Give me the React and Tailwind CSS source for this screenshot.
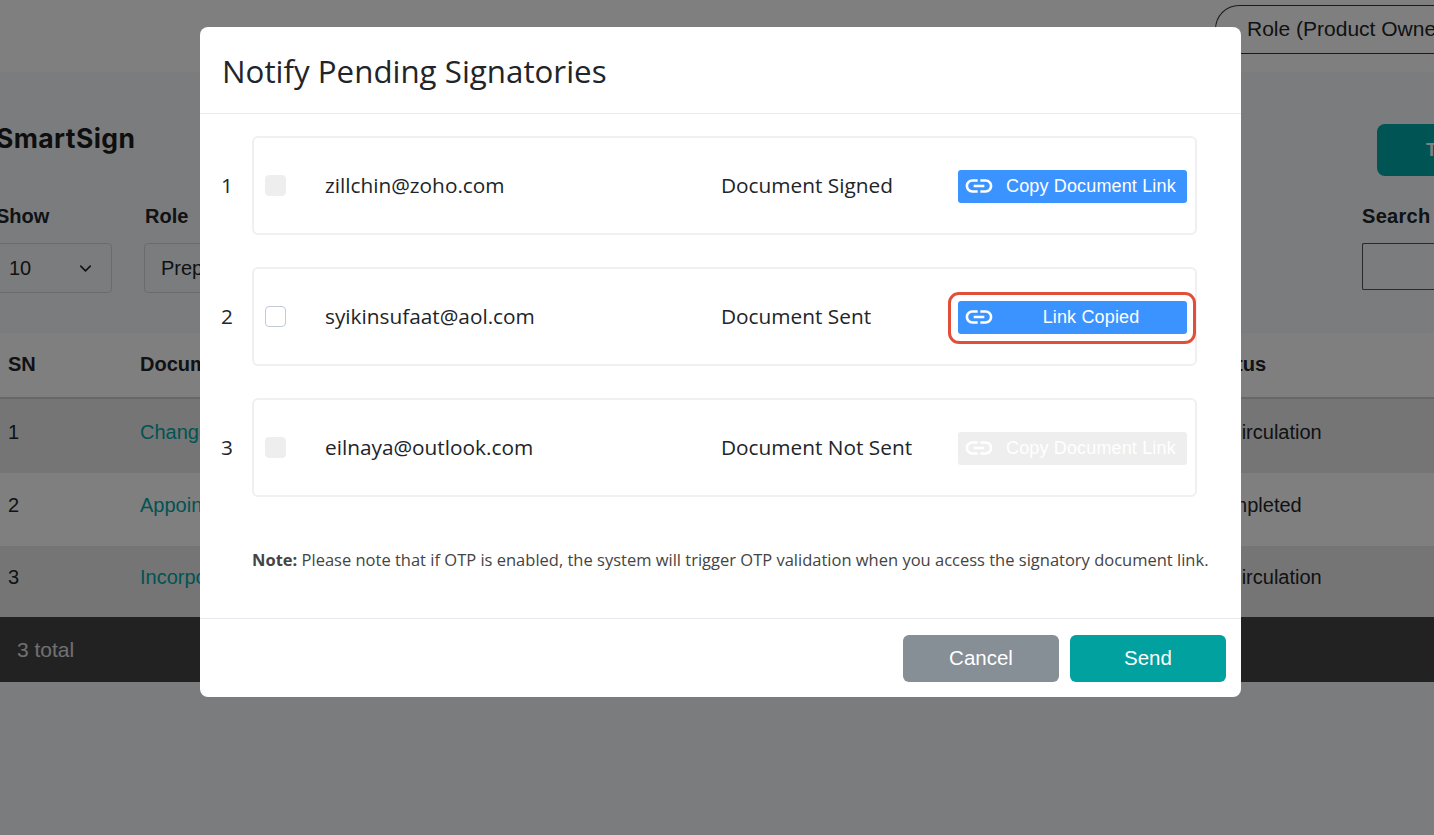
import React from 'react';
import { MdLink } from 'react-icons/md';
import { ChevronDown } from 'lucide-react';

const signatories = [
  { id: 1, email: 'zillchin@zoho.com', status: 'Document Signed', state: 'active', disabled: true },
  { id: 2, email: 'syikinsufaat@aol.com', status: 'Document Sent', state: 'copied', disabled: false },
  { id: 3, email: 'eilnaya@outlook.com', status: 'Document Not Sent', state: 'off', disabled: true },
];

const docs = [
  { sn: 1, name: 'Change Request Form', status: 'In Circulation', row: 'bg-[#ebebeb] h-[74px]' },
  { sn: 2, name: 'Appointment Letter', status: 'Completed', row: 'bg-[#fefefe] h-[73px]' },
  { sn: 3, name: 'Incorporation Papers', status: 'In Circulation', row: 'bg-[#ebebeb] h-[71px]' },
];

function Background() {
  return (
    <div className="w-full h-full flex flex-col bg-[#f6f8fc] text-[#212529] font-['Liberation_Sans',Arial,sans-serif]">
      <div className="h-[72px] bg-white flex justify-end items-start shrink-0 pt-[5px]">
        <div className="w-[219px] h-[49px] border-l border-t border-b border-[#333] rounded-tl-[24px] rounded-bl-[24px] pl-[31px] pb-[2px] flex items-center text-[21px] whitespace-nowrap overflow-hidden">
          Role (Product Owner)
        </div>
      </div>
      <div className="flex justify-between items-start h-[52px] mt-[52px] shrink-0">
        <div className="-ml-[4px] font-['Inter',sans-serif] font-bold text-[26.5px] tracking-[0.4px] leading-[28px] text-[#1c1c1c]">SmartSign</div>
        <div className="w-[57px] h-[52px] bg-[#00a8a6] rounded-l-[8px] pl-[49px] flex items-center text-white font-bold text-[18px] overflow-hidden">T</div>
      </div>
      <div className="flex mt-[27px] h-[81px] shrink-0 -ml-[4px] text-[20px]">
        <div className="w-[148px]">
          <div className="font-bold h-[26px] leading-[26px]">Show</div>
          <div className="w-[116px] h-[50px] mt-[14px] border border-[#d5d7db] rounded-[4px] flex items-center justify-between pl-[12px] pr-[16px]">
            10 <ChevronDown size={19} strokeWidth={2} />
          </div>
        </div>
        <div>
          <div className="font-bold h-[26px] leading-[26px] ml-[1px]">Role</div>
          <div className="w-[300px] h-[50px] mt-[14px] border border-[#d5d7db] rounded-[4px] flex items-center pl-[16px]">Preparer</div>
        </div>
        <div className="ml-auto w-[72px]">
          <div className="font-bold h-[26px] leading-[26px] tracking-[0.3px]">Search</div>
          <div className="h-[47px] mt-[14px] border-l border-t border-b border-[#555] rounded-l-[2px]"></div>
        </div>
      </div>
      <div className="mt-[49px] shrink-0 text-[20px]">
        <div className="grid grid-cols-[132px_1065px_1fr] items-center px-[8px] pb-[3px] h-[66px] bg-white border-b-2 border-[#d0d0d0] font-bold">
          <div>SN</div>
          <div>Document Name</div>
          <div>Status</div>
        </div>
        {docs.map((d) => (
          <div key={d.sn} className={`grid grid-cols-[132px_1065px_1fr] items-center px-[8px] pb-[9px] ${d.row}`}>
            <div>{d.sn}</div>
            <div className="text-[#00a8a6]">{d.name}</div>
            <div>{d.status}</div>
          </div>
        ))}
        <div className="h-[65px] bg-[#444] text-[#e0e0e0] flex items-center px-[17px] text-[21px]">3 total</div>
      </div>
    </div>
  );
}

function LinkButton({ state }) {
  const cls = state === 'off' ? 'bg-[#eeeeee]' : 'bg-[#3b93ff]';
  return (
    <button className={`relative w-[229px] h-[33px] mt-[2px] rounded-[3px] flex items-center text-white text-[18px] tracking-[0.15px] font-['Liberation_Sans',Arial,sans-serif] ${cls}`}>
      <MdLink size={32} className="absolute left-[5px] top-[0px]" />
      {state === 'copied'
        ? <span className="w-full pl-[37px] text-center">Link Copied</span>
        : <span className="pl-[48px] whitespace-nowrap">Copy Document Link</span>}
      {state === 'copied' && (
        <span className="absolute -left-[10px] -right-[9px] -top-[9px] -bottom-[10px] border-[3px] border-[#e14f3b] rounded-[11px]"></span>
      )}
    </button>
  );
}

export default function App() {
  return (
    <div className="relative w-screen h-screen overflow-hidden">
      <Background />
      <div className="fixed inset-0 bg-black/50">
        <div className="ml-[200px] mt-[27px] w-[1041px] h-[670px] bg-white rounded-[8px] flex flex-col text-[#212529] font-['Open_Sans',sans-serif]">
          <div className="h-[87px] shrink-0 border-b border-[#e9ecef] pl-[22px] pt-[2px] flex items-center text-[31.3px]">
            Notify Pending Signatories
          </div>
          <div className="flex-1 pt-[22px] pl-[21px] pr-[44px]">
            <div className="flex flex-col gap-[32px]">
              {signatories.map((s) => (
                <div key={s.id} className="flex items-center text-[20.8px]">
                  <div className="w-[31px]">{s.id}</div>
                  <div className="flex-1 h-[99px] border-2 border-[#f0f0f0] rounded-[6px] flex items-center pl-[11px]">
                    <input
                      type="checkbox"
                      disabled={s.disabled}
                      className={`appearance-none w-[21px] h-[21px] rounded-[4px] mr-[39px] border ${s.disabled ? 'bg-[#eeeeee] border-[#eeeeee]' : 'bg-white border-[#c3cad8]'}`}
                    />
                    <div className="w-[396px]">{s.email}</div>
                    <div className="w-[237px]">{s.status}</div>
                    <LinkButton state={s.state} />
                  </div>
                </div>
              ))}
            </div>
            <p className="mt-[53px] ml-[31px] text-[16.5px] leading-[20px] whitespace-nowrap text-[#444]">
              <strong className="font-bold">Note:</strong> Please note that if OTP is enabled, the system will trigger OTP validation when you access the signatory document link.
            </p>
          </div>
          <div className="h-[79px] shrink-0 border-t border-[#e6e8ee] flex justify-end gap-[11px] pt-[16px] pr-[15px] text-[20.5px] text-white font-['Liberation_Sans',Arial,sans-serif]">
            <button className="w-[156px] h-[47px] rounded-[6px] bg-[#868e96]">Cancel</button>
            <button className="w-[156px] h-[47px] rounded-[6px] bg-[#00a19f]">Send</button>
          </div>
        </div>
      </div>
    </div>
  );
}
